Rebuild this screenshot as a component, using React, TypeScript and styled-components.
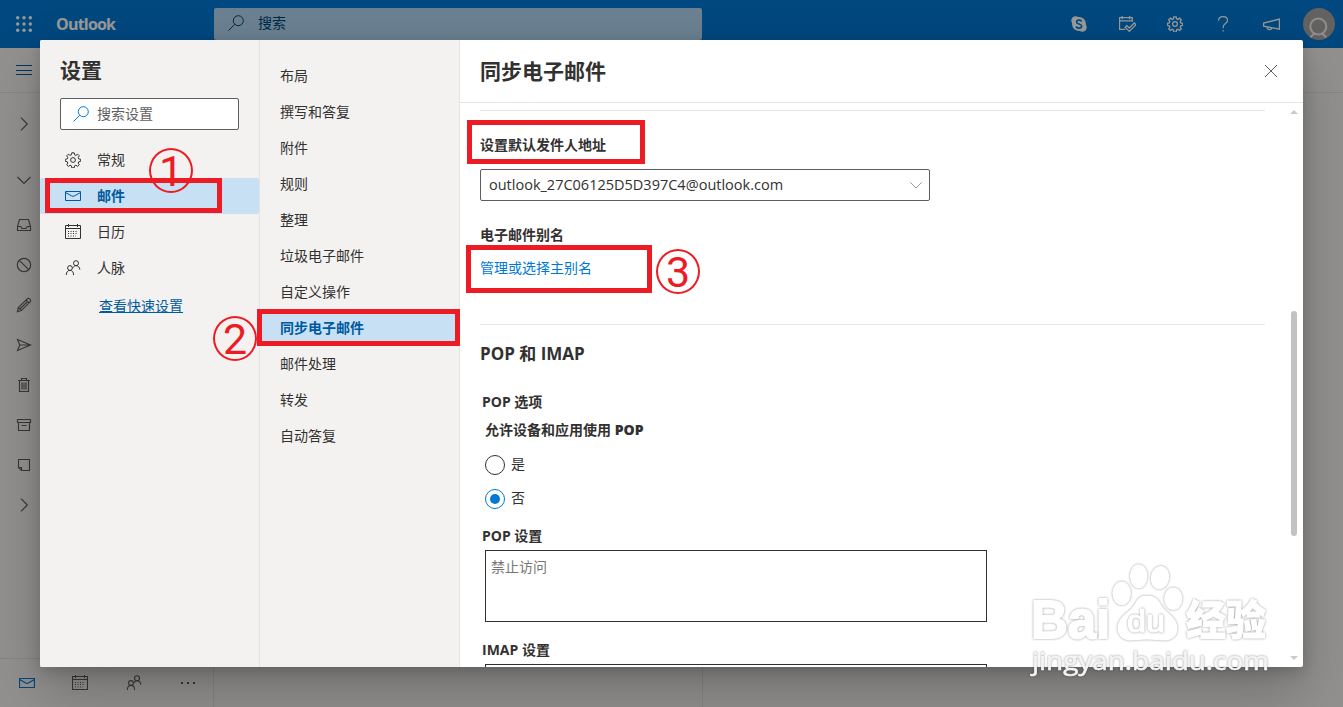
import type { ReactNode } from "react";
import styled, { createGlobalStyle, css } from "styled-components";

const RED = "#ed1c24";

const railItems: { icon: string; height: number }[] = [
  { icon: "chevronRight", height: 62 },
  { icon: "chevronDown", height: 50 },
  { icon: "inbox", height: 40 },
  { icon: "block", height: 40 },
  { icon: "pencil", height: 40 },
  { icon: "send", height: 40 },
  { icon: "trash", height: 40 },
  { icon: "archive", height: 40 },
  { icon: "note", height: 40 },
  { icon: "chevronRight", height: 40 },
];

const categories = [
  { icon: "gear", label: "常规" },
  { icon: "mail", label: "邮件", active: true },
  { icon: "calendar", label: "日历" },
  { icon: "people", label: "人脉" },
];

const sections = [
  "布局",
  "撰写和答复",
  "附件",
  "规则",
  "整理",
  "垃圾电子邮件",
  "自定义操作",
  "同步电子邮件",
  "邮件处理",
  "转发",
  "自动答复",
];

const icons: Record<string, ReactNode> = {
  chevronRight: <path d="M5 1.7 11.3 8 5 14.3" />,
  chevronDown: <path d="M1.5 5 8 11.5 14.5 5" />,
  menu: <path d="M0 3.5h16M0 8.5h16M0 12.5h16" />,
  inbox: <path d="M3.5 2.5h9l2 7v4h-13v-4zM1.5 9.5h3.3l1.2 2h4l1.2-2h3.3" />,
  block: (
    <>
      <circle cx="8" cy="8" r="6.7" />
      <path d="m3.3 3.3 9.4 9.4" />
    </>
  ),
  pencil: <path d="m1.4 14.6 1-4 8.7-8.7a1.7 1.7 0 0 1 2.5 0l.5.5a1.7 1.7 0 0 1 0 2.5l-8.7 8.7zM2.4 10.6l3 3M10 3l3 3M4 12l7-7" />,
  send: <path d="M1.5 2.5 14.5 8l-13 5.5L3.8 8zM3.8 8h10.7" />,
  trash: <path d="M2 3.5h12M5.5 3.5v-2h5v2M3.5 3.5v11h9v-11M6 5.5v7M8 5.5v7M10 5.5v7" />,
  archive: <path d="M1.5 2.5h13v3h-13zM2.5 5.5v8h11v-8M5.5 8.5h5" />,
  note: <path d="M2.5 2.5h11v11h-8l-3-3zM2.5 10.5h3v3" />,
  mail: <path d="M.5 3.5h15v9H.5zM.5 4.5 6.8 8q1.2.6 2.4 0l6.3-3.5" />,
  calendar: (
    <>
      <path d="M.5 1.5h15v13H.5zM.5 4.5h15M3.5 0v3M12.5 0v3" />
      <path d="M3 7.5h10M3 9.5h10M3 12h8" strokeDasharray="1 1.5" />
    </>
  ),
  people: (
    <>
      <circle cx="5" cy="8" r="2.4" />
      <path d="M1.3 15c0-2.8 1.4-4.6 3.7-4.6s3.6 1.8 3.6 4.6" />
      <circle cx="11" cy="3.2" r="2.5" />
      <path d="M8 7.7c.7-1.3 1.7-2 3-2 2.3 0 3.6 1.5 3.9 4" />
    </>
  ),
  search: (
    <>
      <circle cx="10.3" cy="5.7" r="5" />
      <path d="M6.7 9.3.5 15.5" />
    </>
  ),
  gear: (
    <>
      <path d="m6.8.8-.4 2-1.3.6-1.8-1.2-1.6 1.6 1.1 1.8-.5 1.3-2 .4v2l2 .5.5 1.3-1.1 1.7 1.6 1.6 1.8-1.1 1.3.5.4 2h2.4l.4-2 1.3-.5 1.8 1.1 1.6-1.6-1.1-1.7.5-1.3 2-.5v-2l-2-.4-.5-1.3 1.1-1.8-1.6-1.6-1.8 1.2-1.3-.6-.4-2z" />
      <circle cx="8" cy="8" r="2.4" />
    </>
  ),
  help: (
    <>
      <path d="M3.5 4.7C3.5 2 5.3.6 8 .6s4.5 1.5 4.5 3.8c0 3-4.3 3.7-4.3 6.3v1.6" />
      <path d="M8.2 14v1.5" />
    </>
  ),
  megaphone: <path d="M15.5 3v9.5l-15-3V6.7zM4 10.3c0 3.1 4 3.4 4.3.8" />,
  myDay: (
    <>
      <path d="M6 12.5H.5v-11h12v4M.5 4.5h12M3 0v3M10 0v3" />
      <path d="m5.8 10.6 1.6-1.6 2.3 2.3L14.4 6.6 16 8.2l-6.3 6.3z" />
    </>
  ),
  close: <path d="m2 2 12 12M14 2 2 14" />,
};

type IconProps = { name: string; size?: number; weight?: number };

const Icon = ({ name, size = 16, weight = 1 }: IconProps) => (
  <Glyph width={size} height={size} viewBox="0 0 16 16" strokeWidth={weight}>
    {icons[name]}
  </Glyph>
);

const SkypeIcon = () => (
  <svg width="16" height="16" viewBox="0 0 16 16">
    <circle cx="8" cy="8" r="7" fill="#fff" />
    <circle cx="4.6" cy="4.6" r="4.3" fill="#fff" />
    <circle cx="11.4" cy="11.4" r="4.3" fill="#fff" />
    <path
      d="M10.6 5.5C10.2 3.6 5.6 3.5 5.6 5.9c0 2.6 5 1.4 5 4.1 0 2.8-5 2.7-5.3.3"
      fill="none"
      stroke="#0078d4"
      strokeWidth="1.6"
    />
  </svg>
);

const Waffle = () => (
  <svg width="16" height="16" viewBox="0 0 16 16" fill="#fff">
    {[1.7, 8, 14.3].map((y) => [1.7, 8, 14.3].map((x) => <circle key={`${x}-${y}`} cx={x} cy={y} r="1.7" />))}
  </svg>
);

const Avatar = () => (
  <svg width="32" height="32" viewBox="0 0 32 32">
    <circle cx="16" cy="16" r="16" fill="#a6a4a2" />
    <g fill="none" stroke="#f0efee" strokeWidth="2">
      <circle cx="15.3" cy="18.5" r="8" />
      <path d="M7.5 29.5c1.3-2 2.5-3.3 4.2-4.2M23 29.5c-1.3-2-2.5-3.3-4.2-4.2" />
    </g>
  </svg>
);

const Watermark = () => (
  <WatermarkLayer width="260" height="130" viewBox="1020 555 260 130">
    <g>
      <ellipse cx="1121.7" cy="593.3" rx="9.3" ry="11.8" />
      <ellipse cx="1138.7" cy="576.3" rx="8.8" ry="12" />
      <ellipse cx="1160" cy="577.7" rx="9.2" ry="11.8" transform="rotate(10 1160 577.7)" />
      <ellipse cx="1173.3" cy="598.7" rx="9.2" ry="11.3" />
      <path d="M1147 595.5c7 0 11 3 14 9 4 8 16.500 12 16.500 24 0 8-6 12-13 12-6 0-11-1-17.500-1s-11 1-17 1c-7 0-12.500-5-12.500-12 0-12 12-16 17-24 3-6 6-9 12.500-9z" />
    </g>
    <Wordmark>
      <text x="1031" y="637.5" fontWeight="700" fontSize="54" strokeWidth="2" textLength="79" lengthAdjust="spacingAndGlyphs">Bai</text>
      <text x="1127" y="632" fontSize="32" strokeWidth="1.2" textLength="38" lengthAdjust="spacingAndGlyphs">du</text>
      <text x="1186" y="635" fontWeight="900" fontSize="41" textLength="80" lengthAdjust="spacingAndGlyphs">经验</text>
    </Wordmark>
    <Domain>
      <text x="1032" y="669.5" fontSize="25" strokeWidth="0.6" textLength="237" lengthAdjust="spacingAndGlyphs">jingyan.baidu.com</text>
    </Domain>
  </WatermarkLayer>
);

const App = () => {
  return (
    <Page>
      <GlobalStyle />
      <Header>
        <WaffleCell><Waffle /></WaffleCell>
        <Brand>Outlook</Brand>
        <HeaderSearch>
          <Icon name="search" />
          <span>搜索</span>
        </HeaderSearch>
        <HeaderActions>
          <HeaderCell><SkypeIcon /></HeaderCell>
          <HeaderCell><Icon name="myDay" size={17} weight={1.2} /></HeaderCell>
          <HeaderCell><Icon name="gear" weight={1.3} /></HeaderCell>
          <HeaderCell><Icon name="help" weight={1.2} /></HeaderCell>
          <HeaderCell><Icon name="megaphone" size={17} weight={1.3} /></HeaderCell>
          <HeaderCell><Avatar /></HeaderCell>
        </HeaderActions>
      </Header>
      <CommandBar><Icon name="menu" /></CommandBar>
      <Workspace>
        <FolderPane>
          <Rail>
            {railItems.map((item, i) => (
              <RailCell key={i} $height={item.height}>
                <Icon name={item.icon} weight={1.15} />
              </RailCell>
            ))}
          </Rail>
          <ModuleBar>
            <ModuleCell $active><Icon name="mail" weight={1.2} /></ModuleCell>
            <ModuleCell><Icon name="calendar" weight={1.1} /></ModuleCell>
            <ModuleCell><Icon name="people" weight={1.1} /></ModuleCell>
            <ModuleCell><Dots><i /><i /><i /></Dots></ModuleCell>
          </ModuleBar>
        </FolderPane>
        <MessageList />
        <ReadingPane />
      </Workspace>

      <Scrim>
        <Dialog>
          <CategoryPane>
            <DialogTitle>设置</DialogTitle>
            <SettingsSearch>
              <SearchGlyph><Icon name="search" /></SearchGlyph>
              <span>搜索设置</span>
            </SettingsSearch>
            {categories.map((item) => (
              <Category key={item.label} $active={item.active}>
                <Icon name={item.icon} />
                <span>{item.label}</span>
              </Category>
            ))}
            <QuickLink>查看快速设置</QuickLink>
          </CategoryPane>

          <SectionPane>
            {sections.map((label) => (
              <Section key={label} $active={label === "同步电子邮件"}>{label}</Section>
            ))}
          </SectionPane>

          <DetailPane>
            <DetailHeader>
              <DetailTitle>同步电子邮件</DetailTitle>
              <Icon name="close" />
            </DetailHeader>
            <DetailBody>
              <Content>
                <SenderGroup>
                  <Label>设置默认发件人地址</Label>
                  <Select>
                    <Address>outlook_27C06125D5D397C4@outlook.com</Address>
                    <Icon name="chevronDown" size={14} />
                  </Select>
                  <Label>电子邮件别名</Label>
                  <AliasLink>管理或选择主别名</AliasLink>
                </SenderGroup>
                <PopGroup>
                  <GroupTitle>POP 和 IMAP</GroupTitle>
                  <SubTitle>POP 选项</SubTitle>
                  <Question>允许设备和应用使用 <b>POP</b></Question>
                  <RadioRow>
                    <Radio />
                    <span>是</span>
                  </RadioRow>
                  <RadioRow>
                    <Radio $checked />
                    <span>否</span>
                  </RadioRow>
                  <SubTitle>POP 设置</SubTitle>
                  <ReadOnlyBox>禁止访问</ReadOnlyBox>
                  <SubTitle>IMAP 设置</SubTitle>
                  <ReadOnlyBox />
                </PopGroup>
              </Content>
              <Scrollbar>
                <Arrow $up />
                <Track><Thumb /></Track>
                <Arrow />
              </Scrollbar>
            </DetailBody>
          </DetailPane>
        </Dialog>
      </Scrim>

      <Frame $x={45} $y={178} $w={177} $h={35} />
      <Frame $x={257} $y={309} $w={203} $h={37} />
      <Frame $x={467} $y={120} $w={178} $h={44} />
      <Frame $x={466} $y={245} $w={186} $h={48} />
      <Step $x={149} $y={148}>1</Step>
      <Step $x={213} $y={316}>2</Step>
      <Step $x={656} $y={249}>3</Step>
      <Watermark />
    </Page>
  );
};

export default App;

const GlobalStyle = createGlobalStyle`
  * {
    box-sizing: border-box;
  }
  body {
    margin: 0;
    overflow: hidden;
    font-family: "Open Sans", "Noto Sans CJK SC", sans-serif;
    font-size: 14px;
    line-height: 20px;
    color: #323130;
  }
`;

const Glyph = styled.svg`
  display: block;
  flex: none;
  fill: none;
  stroke: currentColor;
`;

const Page = styled.div`
  position: relative;
  display: flex;
  flex-direction: column;
  width: 1343px;
  height: 707px;
  overflow: hidden;
  background: #f3f2f1;
`;

const Header = styled.header`
  display: flex;
  align-items: center;
  height: 48px;
  flex: none;
  background: #0078d4;
  color: #ffffff;
`;

const WaffleCell = styled.div`
  display: flex;
  justify-content: center;
  width: 47px;
`;

const Brand = styled.div`
  width: 167px;
  padding-left: 9px;
  font-size: 16px;
  font-weight: 700;
  letter-spacing: -0.8px;
`;

const HeaderSearch = styled.div`
  display: flex;
  align-items: center;
  gap: 14px;
  width: 488px;
  height: 32px;
  padding: 0 14px 2px;
  border-radius: 2px;
  background: #b3d7f2;
  color: #004578;
`;

const HeaderActions = styled.div`
  display: flex;
  margin-left: auto;
`;

const HeaderCell = styled.div`
  display: flex;
  align-items: center;
  justify-content: center;
  width: 48px;
  height: 48px;
`;

const CommandBar = styled.div`
  display: flex;
  align-items: center;
  flex: none;
  height: 45px;
  padding-left: 16px;
  border-bottom: 1px solid #e1dfdd;
  color: #005a9e;
`;

const Workspace = styled.div`
  display: flex;
  flex: 1;
`;

const FolderPane = styled.div`
  display: flex;
  flex-direction: column;
  justify-content: space-between;
  width: 214px;
  border-right: 1px solid #e1dfdd;
`;

const Rail = styled.div`
  display: flex;
  flex-direction: column;
  width: 48px;
  color: #605e5c;
`;

const RailCell = styled.div<{ $height: number }>`
  display: flex;
  align-items: center;
  justify-content: center;
  height: ${({ $height }) => $height}px;
`;

const ModuleBar = styled.div`
  display: flex;
  height: 49px;
  border-top: 1px solid #e1dfdd;
`;

const ModuleCell = styled.div<{ $active?: boolean }>`
  display: flex;
  align-items: center;
  justify-content: center;
  flex: none;
  width: 53.6px;
  color: ${({ $active }) => ($active ? "#0078d4" : "#605e5c")};
`;

const Dots = styled.div`
  display: flex;
  gap: 4px;

  i {
    width: 2px;
    height: 2px;
    background: currentColor;
  }
`;

const MessageList = styled.div`
  width: 489px;
  border-right: 1px solid #e1dfdd;
`;

const ReadingPane = styled.div`
  flex: 1;
`;

const Scrim = styled.div`
  position: absolute;
  inset: 0;
  display: flex;
  padding: 40px;
  background: rgba(0, 0, 0, 0.4);
`;

const Dialog = styled.div`
  display: flex;
  flex: 1;
  height: 627px;
  overflow: hidden;
  border-radius: 2px;
  background: #ffffff;
  box-shadow: 0 25.6px 57.6px rgba(0, 0, 0, 0.22), 0 4.8px 14.4px rgba(0, 0, 0, 0.18);
`;

const CategoryPane = styled.div`
  display: flex;
  flex-direction: column;
  flex: none;
  width: 220px;
  border-right: 1px solid #e6e4e2;
  background: #f3f2f1;
`;

const DialogTitle = styled.h1`
  margin: 15px 0 13px 20px;
  font-size: 21px;
  font-weight: 700;
  line-height: 30px;
`;

const SettingsSearch = styled.div`
  display: flex;
  align-items: center;
  gap: 8px;
  width: 179px;
  height: 32px;
  margin: 0 0 12px 20px;
  padding-left: 12px;
  border: 1px solid #605e5c;
  border-radius: 2px;
  background: #ffffff;
  color: #605e5c;
`;

const SearchGlyph = styled.span`
  color: #0078d4;
`;

const activeItem = css`
  background: #c7e0f4;
  color: #005a9e;
  font-weight: 700;
`;

const Category = styled.div<{ $active?: boolean }>`
  display: flex;
  align-items: center;
  gap: 16px;
  height: 36px;
  padding-left: 25px;
  border-radius: 2px;
  ${({ $active }) => $active && activeItem}
`;

const QuickLink = styled.a`
  margin: 10px 0 0 59px;
  color: #005a9e;
  text-decoration: underline;
  text-underline-offset: 1px;
`;

const SectionPane = styled.div`
  flex: none;
  width: 200px;
  padding-top: 18px;
  border-right: 1px solid #e6e4e2;
  background: #f3f2f1;
`;

const Section = styled.div<{ $active: boolean }>`
  height: 36px;
  padding-left: 20px;
  line-height: 36px;
  ${({ $active }) => $active && activeItem}
`;

const DetailPane = styled.div`
  display: flex;
  flex-direction: column;
  flex: 1;
`;

const DetailHeader = styled.div`
  display: flex;
  align-items: center;
  justify-content: space-between;
  flex: none;
  height: 63px;
  padding: 0 24px 0 20px;
  border-bottom: 1px solid #e6e6e6;
  color: #605e5c;
`;

const DetailTitle = styled.h2`
  margin: 0;
  font-size: 21px;
  font-weight: 700;
  line-height: 30px;
  color: #323130;
`;

const DetailBody = styled.div`
  display: flex;
  flex: 1;
  min-height: 0;
`;

const Content = styled.div`
  width: 805px;
  padding: 7px 0 0 20px;
  overflow: hidden;
`;

const SenderGroup = styled.div`
  display: flex;
  flex-direction: column;
  height: 214px;
  padding-top: 24px;
  border-top: 1px solid #e6e6e6;
`;

const Label = styled.div`
  font-weight: 600;
`;

const Select = styled.div`
  display: flex;
  align-items: center;
  justify-content: space-between;
  width: 450px;
  height: 32px;
  margin: 14px 0 24px;
  padding: 0 6px 0 8px;
  border: 1px solid #605e5c;
  border-radius: 2px;
  color: #8a8886;
`;

const Address = styled.span`
  font-size: 14.5px;
  color: #323130;
`;

const AliasLink = styled.a`
  margin-top: 13px;
  color: #0078d4;
`;

const PopGroup = styled.div`
  display: flex;
  flex-direction: column;
  padding-top: 18px;
  border-top: 1px solid #e6e6e6;
`;

const GroupTitle = styled.h3`
  margin: 0 0 27px;
  font-size: 17px;
  font-weight: 700;
  line-height: 22px;
`;

const SubTitle = styled.div`
  height: 20px;
  padding-left: 2px;
  font-weight: 700;
`;

const Question = styled.div`
  margin: 8px 0 10px 5px;
  font-weight: 600;
`;

const RadioRow = styled.div`
  display: flex;
  align-items: center;
  gap: 6px;
  height: 34px;
  padding: 0 0 4px 5px;

  span:last-child {
    margin-top: -2px;
  }

  & + ${SubTitle} {
    margin: 8px 0 4px;
  }
`;

const Radio = styled.span<{ $checked?: boolean }>`
  display: flex;
  align-items: center;
  justify-content: center;
  width: 20px;
  height: 20px;
  border: 1px solid ${({ $checked }) => ($checked ? "#0078d4" : "#323130")};
  border-radius: 50%;

  &::after {
    content: "";
    width: 10px;
    height: 10px;
    border-radius: 50%;
    background: ${({ $checked }) => ($checked ? "#0078d4" : "transparent")};
  }
`;

const ReadOnlyBox = styled.div`
  flex: none;
  width: 502px;
  height: 72px;
  margin: 0 0 18px 5px;
  padding: 6px 5px;
  border: 1px solid #323130;
  color: #767676;

  &:last-child {
    margin-top: 4px;
  }
`;

const Scrollbar = styled.div`
  display: flex;
  flex-direction: column;
  align-items: center;
  width: 18px;
  margin-left: 20px;
  padding: 7px 0 7px;
`;

const Arrow = styled.div<{ $up?: boolean }>`
  width: 8px;
  height: 4px;
  background: #c8ccd0;
  clip-path: ${({ $up }) => ($up ? "polygon(50% 0, 100% 100%, 0 100%)" : "polygon(0 0, 100% 0, 50% 100%)")};
`;

const Track = styled.div`
  flex: 1;
  padding-top: 197px;
`;

const Thumb = styled.div`
  width: 6px;
  height: 225px;
  border-radius: 3px;
  background: #c2c2c2;
`;

const Frame = styled.div<{ $x: number; $y: number; $w: number; $h: number }>`
  position: absolute;
  left: ${({ $x }) => $x}px;
  top: ${({ $y }) => $y}px;
  width: ${({ $w }) => $w}px;
  height: ${({ $h }) => $h}px;
  border: 5px solid ${RED};
`;

const Step = styled.div<{ $x: number; $y: number }>`
  position: absolute;
  left: ${({ $x }) => $x}px;
  top: ${({ $y }) => $y}px;
  width: 44px;
  height: 45px;
  border: 2px solid ${RED};
  border-radius: 50%;
  color: ${RED};
  font-family: Roboto, sans-serif;
  font-size: 43px;
  line-height: 42px;
  text-align: center;
`;

const WatermarkLayer = styled.svg`
  position: absolute;
  left: 1020px;
  top: 555px;
  fill: #ffffff;

  g {
    filter: drop-shadow(0 0 1px rgba(0, 0, 0, 0.4));
  }
`;

const Wordmark = styled.g`
  font-family: "Liberation Sans", "Noto Sans CJK SC", sans-serif;
  stroke: #ffffff;
`;

const Domain = styled.g`
  font-family: "Open Sans", sans-serif;
  fill: #f4f4f4;
  stroke: #f4f4f4;
`;
